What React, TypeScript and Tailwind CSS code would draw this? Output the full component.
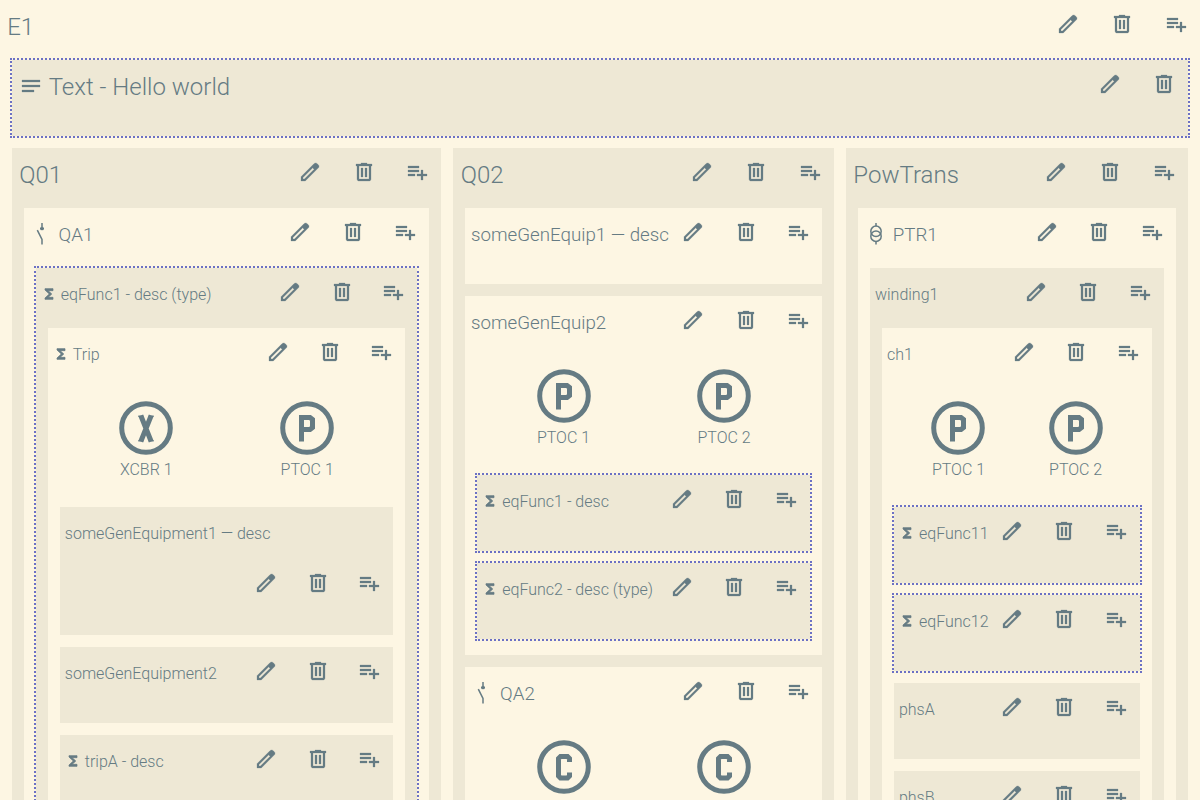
import type { ReactNode } from "react";

const PATHS = {
  edit: "M200-200h57l391-391-57-57-391 391v57Zm-80 80v-170l528-527q12-11 26.5-17t30.5-6q16 0 31 6t26 18l55 56q12 11 17.5 26t5.5 30q0 16-5.5 30.5T817-647L290-120H120Zm640-584-56-56 56 56Zm-141 85-28-29 57 57-29-28Z",
  trash:
    "M280-120q-33 0-56.5-23.5T200-200v-520h-40v-80h200v-40h240v40h200v80h-40v520q0 33-23.5 56.5T680-120H280Zm400-600H280v520h400v-520ZM360-280h80v-360h-80v360Zm160 0h80v-360h-80v360Z",
  add: "M120-320v-80h280v80H120Zm0-160v-80h440v80H120Zm0-160v-80h440v80H120Zm520 480v-160H480v-80h160v-160h80v160h160v80H720v160h-80Z",
  notes: "M120-240v-80h480v80H120Zm0-200v-80h720v80H120Zm0-200v-80h720v80H120Z",
  sigma: "M240-160v-80l260-240-260-240v-80h480v120H431l215 200-215 200h289v120H240Z",
};

function Icon({ name, className = "size-6" }: { name: keyof typeof PATHS; className?: string }) {
  return (
    <svg
      viewBox="0 -960 960 960"
      fill="currentColor"
      stroke="currentColor"
      strokeWidth={name === "sigma" ? 45 : 10}
      className={`inline-block shrink-0 ${className}`}
    >
      <path d={PATHS[name]} />
    </svg>
  );
}

function Action({ name }: { name: "edit" | "trash" | "add" }) {
  return (
    <button className="inline-flex size-12 items-center justify-center align-top">
      <Icon name={name} />
    </button>
  );
}

const Sigma = () => <Icon name="sigma" className="mr-1 mb-0.5 size-4" />;

const Breaker = () => (
  <svg viewBox="0 0 24 24" fill="none" stroke="currentColor" strokeWidth="1.5" className="mr-[5px] mb-0.5 size-6 shrink-0">
    <path d="M10 6.6h4M10.7 5.2l2.6 2.8M13.3 5.2l-2.6 2.8" strokeWidth="1.2" />
    <path d="M12 1v7M7.3 8.2l4.7 9.3v5" />
  </svg>
);

const Transformer = () => (
  <svg viewBox="0 0 24 24" fill="none" stroke="currentColor" strokeWidth="1.5" className="mr-[5px] mb-0.5 size-6 shrink-0">
    <circle cx="12" cy="9.3" r="5.2" />
    <circle cx="12" cy="14.2" r="5.2" />
    <path d="M12 1v3.2M12 19.4v3.2" />
  </svg>
);

type Level = 1 | 2 | 3;
const SIZE: Record<Level, string> = {
  1: "text-[24px]",
  2: "text-[18.72px]",
  3: "text-[16px]",
};

interface PaneProps {
  title: string;
  level?: Level;
  light?: boolean;
  dotted?: boolean;
  wrap?: boolean;
  noAdd?: boolean;
  icon?: ReactNode;
  children?: ReactNode;
}

function Pane({ title, level = 3, light, dotted, wrap, noAdd, icon, children }: PaneProps) {
  return (
    <section
      className={`${light ? "bg-[#fdf6e3]" : "bg-[#eee8d5]"} ${dotted ? "outline-2 outline-dotted outline-[#6c71c4]" : ""}`}
    >
      <header
        className={`flex justify-between whitespace-nowrap pl-[0.3em] ${SIZE[level]} ${wrap ? "flex-col" : ""} ${children ? "h-[60px]" : wrap ? "h-32" : "h-[76px]"}`}
      >
        <h2 className={`flex min-w-0 items-center leading-[48px] ${wrap ? "-mb-0.5 h-[54px]" : "h-[54px]"}`}>
          {icon}
          {title}
        </h2>
        <nav className={`h-12 shrink-0 leading-[48px] ${wrap ? "mb-7 self-end" : ""}`}>
          <Action name="edit" /> <Action name="trash" />
          {!noAdd && (
            <>
              {" "}
              <Action name="add" />
            </>
          )}
        </nav>
      </header>
      {children && <div className={`flex flex-col gap-3 px-3 ${level === 2 ? "pb-4" : "pb-3"}`}>{children}</div>}
    </section>
  );
}

const LETTERS: Record<string, ReactNode> = {
  X: (
    <>
      <path d="M26.8 19.5 37.2 45.5M37.2 19.5 26.8 45.5" />
      <path d="M24.3 20.3h5M34.7 20.3h5M24.3 44.7h5M34.7 44.7h5" strokeWidth="1.6" />
    </>
  ),
  P: <path d="M26.5 45.5V21.5H35L37.5 23.5V31.5L35 33.5H26.5" />,
  C: <path d="M37.5 27V23.5L35.5 21.5H28.5L26.5 23.5V41L28.5 43H35.5L37.5 41V37.5" />,
};

function Node({ name }: { name: string }) {
  return (
    <figure className="flex flex-col items-center">
      <svg viewBox="0 0 64 64" fill="none" stroke="currentColor" strokeWidth="5" className="size-16">
        <circle cx="32" cy="32" r="24.3" />
        {LETTERS[name[0]]}
      </svg>
      <figcaption className="text-[16px] leading-[19px]">{name}</figcaption>
    </figure>
  );
}

function Nodes({ names }: { names: string[] }) {
  return (
    <div className="grid h-[107px] grid-cols-2 gap-3 px-[11.8px] pt-2">
      {names.map((n) => (
        <Node key={n} name={n} />
      ))}
    </div>
  );
}

export default function App() {
  return (
    <main className="h-[800px] overflow-hidden bg-[#fdf6e3] font-['Roboto',sans-serif] font-light text-[#657b83]">
      <Pane title="E1" level={1} light>
        <Pane
          title="Text - Hello world"
          level={1}
          dotted
          noAdd
          icon={<Icon name="notes" className="mr-[5.5px] mb-0.5 size-6" />}
        />
        <div className="grid grid-cols-[429.45px_380.7px_minmax(0,1fr)] gap-3">
          <Pane title="Q01" level={1}>
            <Pane title="QA1" level={2} light icon={<Breaker />}>
              <Pane title="eqFunc1 - desc (type)" dotted icon={<Sigma />}>
                <Pane title="Trip" light icon={<Sigma />}>
                  <Nodes names={["XCBR 1", "PTOC 1"]} />
                  <Pane title="someGenEquipment1 — desc" wrap />
                  <Pane title="someGenEquipment2" />
                  <Pane title="tripA - desc" icon={<Sigma />} />
                </Pane>
              </Pane>
            </Pane>
          </Pane>
          <Pane title="Q02" level={1}>
            <Pane title="someGenEquip1 — desc" level={2} light />
            <Pane title="someGenEquip2" level={2} light>
              <Nodes names={["PTOC 1", "PTOC 2"]} />
              <Pane title="eqFunc1 - desc" dotted icon={<Sigma />} />
              <Pane title="eqFunc2 - desc (type)" dotted icon={<Sigma />} />
            </Pane>
            <Pane title="QA2" level={2} light icon={<Breaker />}>
              <Nodes names={["CSWI 1", "CILO 1"]} />
            </Pane>
          </Pane>
          <Pane title="PowTrans" level={1}>
            <Pane title="PTR1" level={2} light icon={<Transformer />}>
              <Pane title="winding1">
                <Pane title="ch1" light>
                  <Nodes names={["PTOC 1", "PTOC 2"]} />
                  <Pane title="eqFunc11" dotted icon={<Sigma />} />
                  <Pane title="eqFunc12" dotted icon={<Sigma />} />
                  <Pane title="phsA" />
                  <Pane title="phsB" />
                </Pane>
              </Pane>
            </Pane>
          </Pane>
        </div>
      </Pane>
    </main>
  );
}
